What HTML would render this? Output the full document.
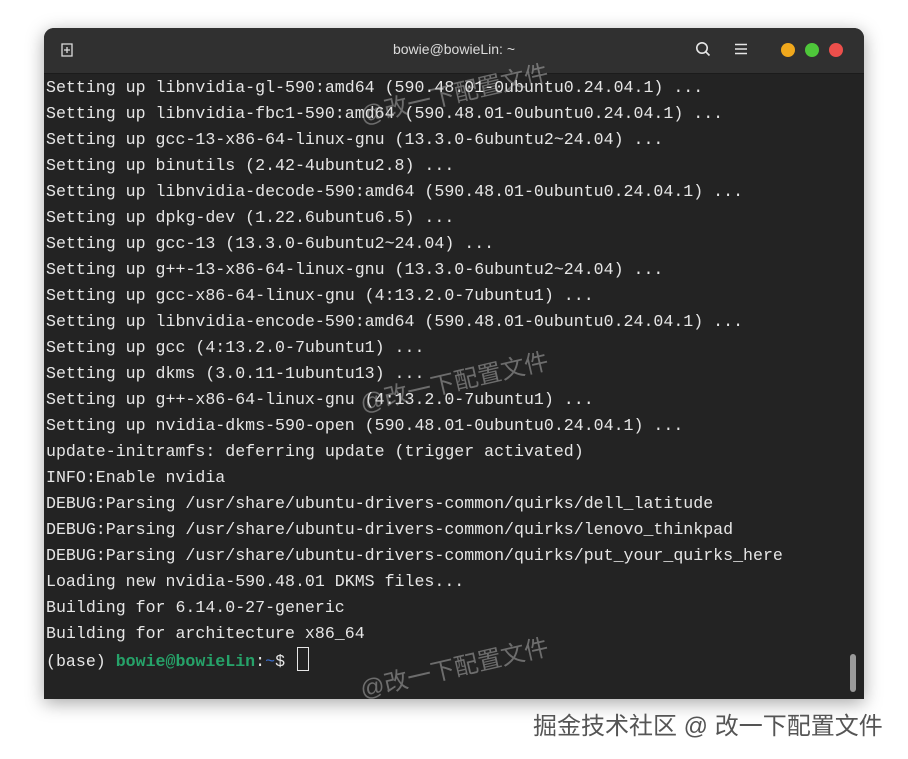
<!DOCTYPE html>
<html><head><meta charset="utf-8"><style>
html,body{margin:0;padding:0;width:908px;height:759px;background:#fff;overflow:hidden;position:relative}
.win{position:absolute;left:44px;top:28px;width:820px;height:671px;background:#232323;border-radius:10px 10px 0 0;box-shadow:0 4px 18px rgba(0,0,0,.35);overflow:hidden}
.tb{position:absolute;left:0;top:0;width:820px;height:45px;background:#303030;border-bottom:1px solid #1b1b1b}
.title{position:absolute;left:0;right:0;top:13px;text-align:center;color:#dcdcdc;font:14px "Liberation Sans","DejaVu Sans",sans-serif}
.dot{position:absolute;top:15px;width:14px;height:14px;border-radius:50%}
.term{position:absolute;left:2px;top:47px;font:16.6px/26px "Liberation Mono","DejaVu Sans Mono",monospace;color:#e6e6e6;white-space:pre}
.g{color:#26a269;font-weight:bold}.b{color:#3b6fd1}
.cur{display:inline-block;width:10px;height:22px;border:1px solid #e6e6e6;vertical-align:-5px;margin-left:2px}
.wm{position:absolute;color:rgba(200,200,200,.45);font:24px "Liberation Sans","Noto Sans CJK SC",sans-serif;transform:rotate(-13deg);transform-origin:left center;white-space:nowrap}
.sb{position:absolute;left:806px;top:626px;width:6px;height:38px;border-radius:3px;background:#9a9a9a}
.foot{position:absolute;left:533px;top:706px;color:#555;font:24px "Liberation Sans","Noto Sans CJK SC",sans-serif;white-space:nowrap}
</style></head><body>
<div class="win">
 <div class="tb">
  <svg style="position:absolute;left:16px;top:15px" width="14" height="14" viewBox="0 0 14 14"><path d="M2 1h10v12H2z M7 4v6 M4 7h6" stroke="#ddd" stroke-width="1.3" fill="none"/></svg>
  <div class="title">bowie@bowieLin: ~</div>
  <svg style="position:absolute;left:651px;top:13px" width="16" height="16" viewBox="0 0 16 16"><circle cx="7" cy="7" r="5.2" stroke="#e6e6e6" stroke-width="1.6" fill="none"/><path d="M11 11l3.5 3.5" stroke="#e6e6e6" stroke-width="1.6"/></svg>
  <svg style="position:absolute;left:691px;top:15px" width="12" height="12" viewBox="0 0 12 12"><path d="M0 1.5h12M0 6h12M0 10.5h12" stroke="#e6e6e6" stroke-width="1.4"/></svg>
  <div class="dot" style="left:737px;background:#f0a81c"></div>
  <div class="dot" style="left:761px;background:#4ec73a"></div>
  <div class="dot" style="left:785px;background:#ec4f4b"></div>
 </div>
 <div class="term">Setting up libnvidia-gl-590:amd64 (590.48.01-0ubuntu0.24.04.1) ...
Setting up libnvidia-fbc1-590:amd64 (590.48.01-0ubuntu0.24.04.1) ...
Setting up gcc-13-x86-64-linux-gnu (13.3.0-6ubuntu2~24.04) ...
Setting up binutils (2.42-4ubuntu2.8) ...
Setting up libnvidia-decode-590:amd64 (590.48.01-0ubuntu0.24.04.1) ...
Setting up dpkg-dev (1.22.6ubuntu6.5) ...
Setting up gcc-13 (13.3.0-6ubuntu2~24.04) ...
Setting up g++-13-x86-64-linux-gnu (13.3.0-6ubuntu2~24.04) ...
Setting up gcc-x86-64-linux-gnu (4:13.2.0-7ubuntu1) ...
Setting up libnvidia-encode-590:amd64 (590.48.01-0ubuntu0.24.04.1) ...
Setting up gcc (4:13.2.0-7ubuntu1) ...
Setting up dkms (3.0.11-1ubuntu13) ...
Setting up g++-x86-64-linux-gnu (4:13.2.0-7ubuntu1) ...
Setting up nvidia-dkms-590-open (590.48.01-0ubuntu0.24.04.1) ...
update-initramfs: deferring update (trigger activated)
INFO:Enable nvidia
DEBUG:Parsing /usr/share/ubuntu-drivers-common/quirks/dell_latitude
DEBUG:Parsing /usr/share/ubuntu-drivers-common/quirks/lenovo_thinkpad
DEBUG:Parsing /usr/share/ubuntu-drivers-common/quirks/put_your_quirks_here
Loading new nvidia-590.48.01 DKMS files...
Building for 6.14.0-27-generic
Building for architecture x86_64
(base) <span class="g">bowie@bowieLin</span>:<span class="b">~</span>$ <span class="cur"></span></div>
 <div class="sb"></div>
</div>
<div class="wm" style="left:360px;top:96px">@改一下配置文件</div>
<div class="wm" style="left:360px;top:384px">@改一下配置文件</div>
<div class="wm" style="left:360px;top:670px">@改一下配置文件</div>
<div class="foot">掘金技术社区 @ 改一下配置文件</div>
</body></html>
